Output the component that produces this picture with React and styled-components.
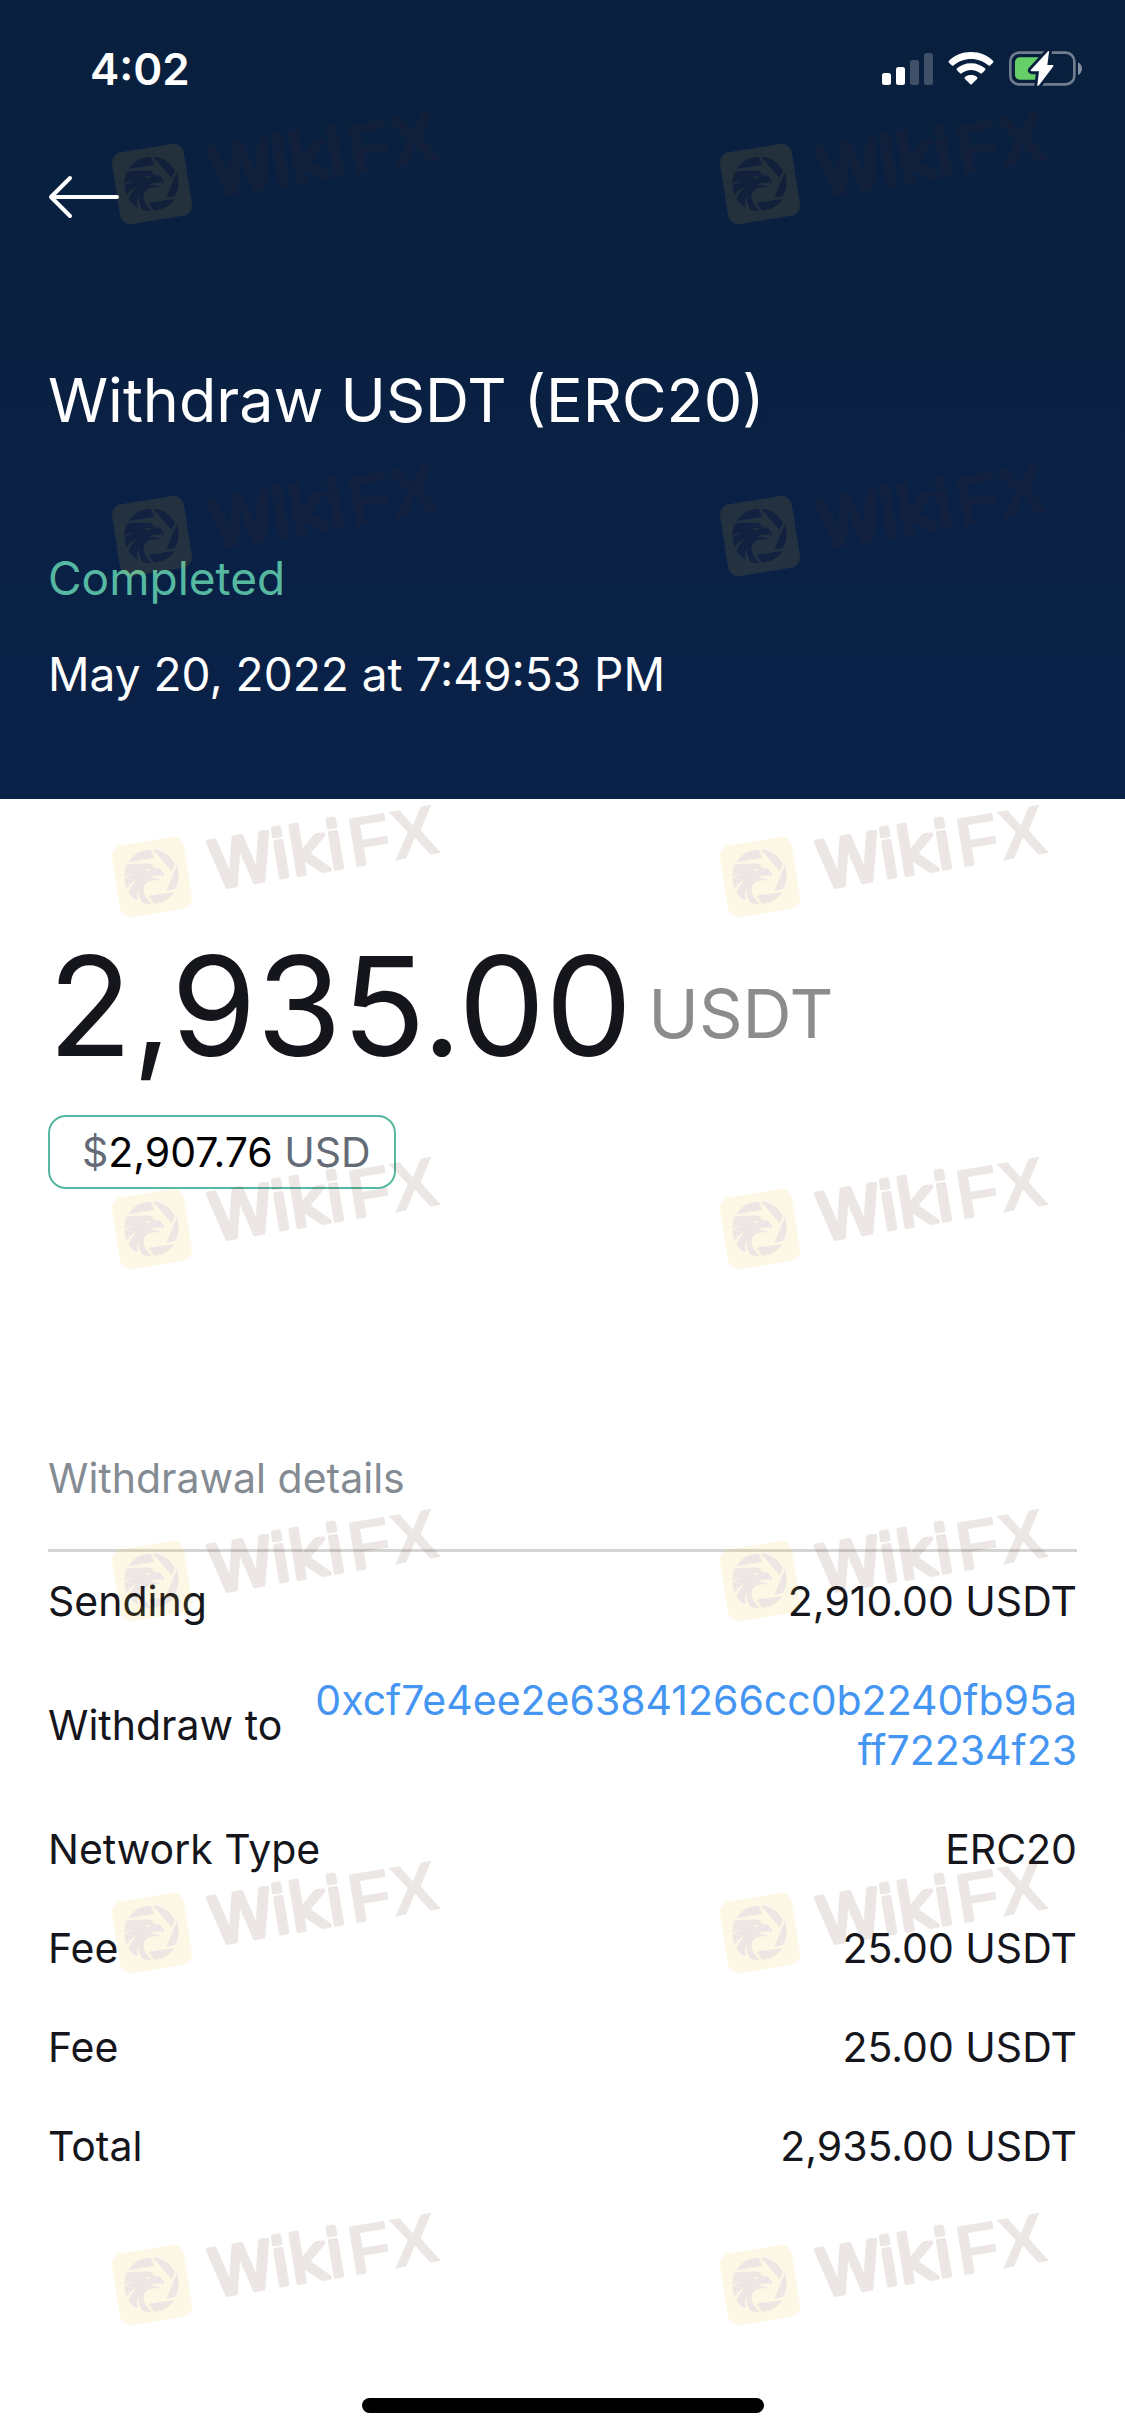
import React from "react";
import styled, { createGlobalStyle } from "styled-components";

const colors = {
  NAVY_TOP: "#091f3d",
  NAVY_BOTTOM: "#0a2249",
  WHITE: "#ffffff",
  INK: "#15161c",
  GREEN: "#56b8a0",
  GRAY: "#8a8c8e",
  SLATE: "#646b76",
  LABEL: "#858b93",
  LINE: "#d5d5d5",
  LINK: "#4596f2",
  MARK_YELLOW: "#f0bd20",
  MARK_BROWN: "#582718",
};

const GlobalStyle = createGlobalStyle`
  * {
    box-sizing: border-box;
  }

  body {
    margin: 0;
    background-color: ${colors.WHITE};
    font-family: Inter, "Liberation Sans", sans-serif;
    color: ${colors.INK};
  }
`;

const Page = styled.div`
  display: flex;
  flex-direction: column;
  min-height: 100vh;
`;

const Header = styled.header`
  position: relative;
  padding: 0 48px 95px;
  background-image: linear-gradient(${colors.NAVY_TOP}, ${colors.NAVY_BOTTOM});
  color: ${colors.WHITE};
`;

const StatusBar = styled.div`
  display: flex;
  justify-content: space-between;
  align-items: center;
  height: 138px;
  padding-left: 42px;
`;

const Time = styled.time`
  font-size: 44px;
  font-weight: 600;
`;

const StatusIcons = styled.div`
  display: flex;
  align-items: center;
  gap: 15px;
  margin-right: -6px;
`;

const BackButton = styled.button`
  display: block;
  height: 120px;
  padding: 0;
  border: 0;
  background: none;
  color: inherit;
`;

const Title = styled.h1`
  margin: 102px 0 0;
  font-size: 61px;
  font-weight: 400;
  line-height: 80px;
`;

const Status = styled.p`
  margin: 108px 0 0;
  font-size: 46px;
  line-height: 60px;
  color: ${colors.GREEN};
`;

const DateText = styled.p`
  margin: 36px 0 0;
  font-size: 46px;
  line-height: 60px;
`;

const Body = styled.main`
  position: relative;
  flex: 1;
  display: flex;
  flex-direction: column;
  padding: 0 48px 23px;
`;

const Amount = styled.div`
  display: flex;
  align-items: center;
  gap: 16px;
  margin-top: 122px;
`;

const AmountValue = styled.span`
  font-size: 138px;
  line-height: 170px;
`;

const AmountUnit = styled.span`
  padding-top: 14px;
  font-size: 68px;
  line-height: 80px;
  color: ${colors.GRAY};
`;

const FiatChip = styled.div`
  align-self: flex-start;
  margin-top: 24px;
  padding: 0 23px 0 32px;
  border: 2px solid ${colors.GREEN};
  border-radius: 18px;
  font-size: 41px;
  line-height: 70px;
  color: #000000;
`;

const Muted = styled.span`
  color: ${colors.SLATE};
`;

const SectionTitle = styled.h2`
  margin: 0;
  padding: 264px 0 46px;
  border-bottom: 3px solid ${colors.LINE};
  font-size: 41px;
  font-weight: 400;
  line-height: 50px;
  color: ${colors.LABEL};
`;

const DetailList = styled.dl`
  display: flex;
  flex-direction: column;
  gap: 49px;
  margin: 24px 0 0;
  font-size: 41px;
  line-height: 50px;
`;

const DetailRow = styled.div`
  display: flex;
  justify-content: space-between;
  align-items: center;
  gap: 28px;
`;

const DetailLabel = styled.dt`
  flex: none;
`;

const DetailValue = styled.dd`
  margin: 0;
  text-align: right;
  word-break: break-all;
`;

const AddressLink = styled.a`
  color: ${colors.LINK};
  text-decoration: none;
`;

const HomeIndicator = styled.div`
  align-self: center;
  width: 402px;
  max-width: 60%;
  height: 15px;
  margin-top: auto;
  border-radius: 8px;
  background-color: #000000;
`;

const WatermarkLayer = styled.div`
  position: absolute;
  inset: 0;
  display: grid;
  grid-template-columns: 330px 330px;
  grid-auto-rows: 118px;
  gap: 234px 278px;
  align-content: start;
  padding: ${(props) => props.$top}px 0 0 110px;
  pointer-events: none;
`;

const WatermarkSvg = styled.svg`
  width: 330px;
  height: 118px;
  overflow: visible;
  opacity: 0.11;
`;

const details = [
  { label: "Sending", value: "2,910.00 USDT" },
  { label: "Withdraw to", value: "0xcf7e4ee2e63841266cc0b2240fb95aff72234f23", link: true },
  { label: "Network Type", value: "ERC20" },
  { label: "Fee", value: "25.00 USDT" },
  { label: "Fee", value: "25.00 USDT" },
  { label: "Total", value: "2,935.00 USDT" },
];

function SignalIcon() {
  return (
    <svg width="51" height="36" viewBox="0 0 51 36" fill="#fff" aria-hidden="true">
      <rect x="0" y="22" width="9" height="12" rx="2.5" />
      <rect x="14" y="16" width="9" height="18" rx="2.5" />
      <rect x="28" y="9" width="9" height="25" rx="2.5" opacity="0.22" />
      <rect x="42" y="2" width="9" height="32" rx="2.5" opacity="0.22" />
    </svg>
  );
}

function WifiIcon() {
  return (
    <svg width="46" height="36" viewBox="0 0 138 108" fill="#fff" aria-hidden="true">
      <path d="M69 3 C95 3 118 13 135 29 Q138 32 135 35 L127 43 Q124 46 121 43 C107 31 89 24 69 24 C49 24 31 31 17 43 Q14 46 11 43 L3 35 Q0 32 3 29 C20 13 43 3 69 3 Z" />
      <path d="M69 37 C86 37 100 43 111 52 Q114 55 111 58 L102 67 Q100 69 97 67 C89 61 80 57 69 57 C58 57 49 61 41 67 Q38 69 36 67 L27 58 Q24 55 27 52 C38 43 52 37 69 37 Z" />
      <path d="M69 72 C76 72 82 74 87 78 Q90 81 87 84 L71 100 Q69 102 67 100 L51 84 Q48 81 51 78 C56 74 62 72 69 72 Z" />
    </svg>
  );
}

function BatteryIcon() {
  const bolt = "M117 1 Q120 -2 120 3 L115 42 L131 42 Q135 43 132 47 L90 103 Q84 108 85 101 L90 61 L68 61 Q63 60 66 56 Z";
  return (
    <svg width="74" height="36" viewBox="0 0 222 108" aria-hidden="true">
      <mask id="bolt-gap">
        <rect width="222" height="108" fill="#fff" />
        <path d={bolt} fill="#000" stroke="#000" strokeWidth="17" strokeLinejoin="round" />
      </mask>
      <g mask="url(#bolt-gap)">
        <rect x="4" y="5" width="192" height="95" rx="26" fill="none" stroke="#fff" strokeOpacity="0.42" strokeWidth="8" />
        <rect x="18" y="19" width="80" height="67" rx="14" fill="#67cf67" />
      </g>
      <path d="M207 34 C223 42 223 64 207 72 Z" fill="#fff" fillOpacity="0.5" />
      <path d={bolt} fill="#fff" />
    </svg>
  );
}

function BackArrow() {
  return (
    <svg width="72" height="44" viewBox="0 0 72 44" fill="none" stroke="currentColor" strokeWidth="4" strokeLinecap="round" strokeLinejoin="round" aria-hidden="true">
      <path d="M3 22 H69 M22 3 L3 22 L22 41" />
    </svg>
  );
}

function Watermark() {
  return (
    <WatermarkSvg viewBox="55 100 990 354" aria-hidden="true">
      <rect x="72" y="219" width="218" height="218" rx="32" fill={colors.MARK_YELLOW} transform="rotate(-9 181 328)" />
      <g fill={colors.MARK_BROWN}>
        <path d="M110 284 C124 260 148 246 177 246 L188 270 Z" />
        <path d="M185 246 C215 248 238 264 250 290 L240 311 Z" />
        <path d="M256 292 C264 316 263 341 250 364 L224 369 Z" />
        <path d="M170 384 L249 373 C234 395 213 406 188 408 Z" />
        <path d="M103 299 C106 288 118 289 132 288 L172 288 C181 289 187 294 187 301 C204 300 217 309 217 328 C211 322 199 324 188 325 Q179 326 173 331 Q190 331 203 335 Q202 338 196 338 C178 336 158 345 156 362 C154 378 166 396 180 409 Q164 410 153 405 Q140 386 140 364 Q134 380 138 398 C125 393 117 384 111 374 C115 358 125 348 134 337 C119 345 109 353 104 364 Q99 351 98 335 C107 326 118 321 129 317 C116 318 106 323 98 330 Q98 311 103 299 Z" />
      </g>
      <path d="M153 303 Q164 308 180 303 Q174 312 164 309 Q157 308 153 303 Z" fill={colors.MARK_YELLOW} />
      <g fill={colors.MARK_BROWN} stroke={colors.MARK_BROWN} strokeLinejoin="round">
        <text
          fontFamily="'DejaVu Sans', sans-serif"
          fontSize="194"
          strokeWidth="14"
          transform="translate(366 363) rotate(-9.5)"
        >
          Wiki
        </text>
        <text
          fontFamily="'Liberation Sans', Arial, sans-serif"
          fontSize="213"
          fontWeight="700"
          strokeWidth="0"
          transform="translate(781 300) rotate(-9.5)"
        >
          FX
        </text>
      </g>
    </WatermarkSvg>
  );
}

function Watermarks({ top, rows }) {
  return (
    <WatermarkLayer $top={top}>
      {Array.from({ length: rows * 2 }, (_, index) => (
        <Watermark key={index} />
      ))}
    </WatermarkLayer>
  );
}

export default function App() {
  return (
    <>
      <GlobalStyle />
      <Page>
        <Header>
          <StatusBar>
            <Time>4:02</Time>
            <StatusIcons>
              <SignalIcon />
              <WifiIcon />
              <BatteryIcon />
            </StatusIcons>
          </StatusBar>
          <BackButton type="button" aria-label="Back">
            <BackArrow />
          </BackButton>
          <Title>Withdraw USDT (ERC20)</Title>
          <Status>Completed</Status>
          <DateText>May 20, 2022 at 7:49:53 PM</DateText>
          <Watermarks top={108} rows={2} />
        </Header>
        <Body>
          <Amount>
            <AmountValue>2,935.00</AmountValue>
            <AmountUnit>USDT</AmountUnit>
          </Amount>
          <FiatChip>
            <Muted>$</Muted>
            2,907.76 <Muted>USD</Muted>
          </FiatChip>
          <SectionTitle>Withdrawal details</SectionTitle>
          <DetailList>
            {details.map(({ label, value, link }, index) => (
              <DetailRow key={index}>
                <DetailLabel>{label}</DetailLabel>
                <DetailValue>
                  {link ? <AddressLink href={`#${value}`}>{value}</AddressLink> : value}
                </DetailValue>
              </DetailRow>
            ))}
          </DetailList>
          <HomeIndicator />
          <Watermarks top={2} rows={5} />
        </Body>
      </Page>
    </>
  );
}
